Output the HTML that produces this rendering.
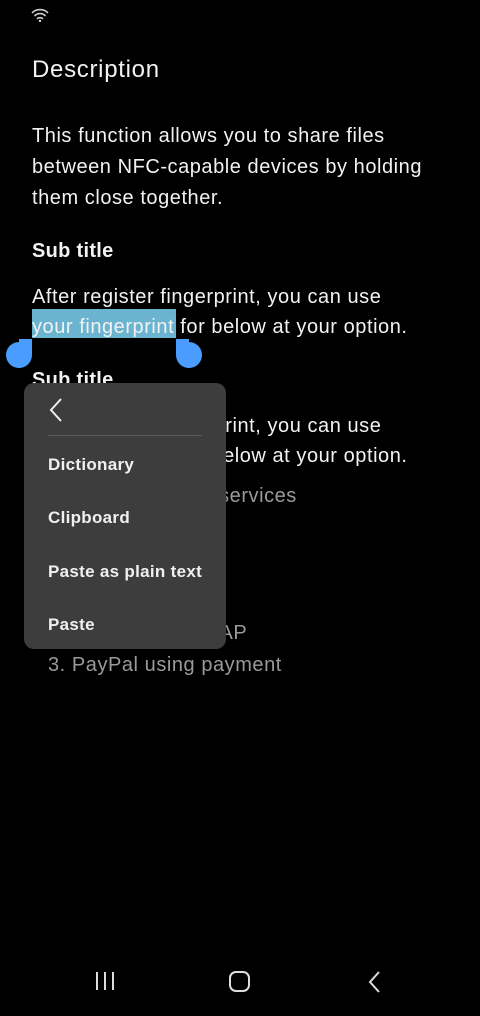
<!DOCTYPE html>
<html><head><style>
body{margin:0;width:480px;height:1016px;background:#000;position:relative;overflow:hidden;font-family:"Liberation Sans",sans-serif;color:#fff}
.t{position:absolute;white-space:nowrap}
.p{font-size:20px;color:#f2f2f2;letter-spacing:0.55px}
.g{font-size:20px;color:#9a9a9a;letter-spacing:0.55px}
.h{font-size:20px;font-weight:bold;color:#f2f2f2;letter-spacing:0.3px}
.m{position:absolute;left:24px;top:383px;width:202px;height:266px;background:#3d3d3d;border-radius:10px}
.mi{position:absolute;left:24px;font-size:17px;font-weight:bold;color:#f0f0f0;letter-spacing:0.3px}
</style></head><body>
<svg class="t" style="left:31px;top:8px" width="18" height="14" viewBox="0 0 18 14"><path d="M1 5a11 11 0 0 1 16 0M3.5 8a7.5 7.5 0 0 1 11 0M6 11a4 4 0 0 1 6 0" stroke="#ccc" stroke-width="1.6" fill="none"/><circle cx="9" cy="13" r="1.2" fill="#ccc"/></svg>
<div class="t" style="left:32px;top:56px;font-size:24px;color:#f2f2f2;letter-spacing:0.7px">Description</div>
<div class="t p" style="left:32px;top:121px;line-height:31px">This function allows you to share files<br>between NFC-capable devices by holding<br>them close together.</div>
<div class="t h" style="left:32px;top:240px">Sub title</div>
<div style="position:absolute;left:32px;top:309px;width:144px;height:29px;background:#6ab4cf"></div>
<div class="t p" style="left:32px;top:282px;line-height:30px">After register fingerprint, you can use<br>your fingerprint for below at your option.</div>
<svg class="t" style="left:5px;top:339px" width="28" height="30"><circle cx="14" cy="16" r="13" fill="#4a9cff"/><rect x="14" y="0" width="13" height="16" fill="#4a9cff"/></svg>
<svg class="t" style="left:176px;top:339px" width="28" height="30"><circle cx="13" cy="16" r="13" fill="#4a9cff"/><rect x="0" y="0" width="13" height="16" fill="#4a9cff"/></svg>
<div class="t h" style="left:32px;top:369px">Sub title</div>
<div class="t p" style="left:32px;top:411px;line-height:30px">After register fingerprint, you can use<br>your fingerprint for below at your option.</div>
<div class="t g" style="left:48px;top:485px">1. Samsung Pass services</div>
<div class="t g" style="left:48px;top:549px">2. Samsung Pass</div>
<div class="t g" style="left:48px;top:622px">1. Samsung Pay TAP</div>
<div class="t g" style="left:48px;top:654px">3. PayPal using payment</div>
<div class="m">
<svg style="position:absolute;left:22px;top:14px" width="20" height="26"><path d="M15 2L5 13L15 24" stroke="#eee" stroke-width="2" fill="none"/></svg>
<div style="position:absolute;left:24px;top:52px;width:154px;height:1px;background:#5a5a5a"></div>
<div class="mi" style="top:72px">Dictionary</div>
<div class="mi" style="top:125px">Clipboard</div>
<div class="mi" style="top:179px">Paste as plain text</div>
<div class="mi" style="top:232px">Paste</div>
</div>
<svg class="t" style="left:94px;top:970px" width="22" height="22"><path d="M3 2v18M11 2v18M19 2v18" stroke="#ddd" stroke-width="2"/></svg>
<svg class="t" style="left:228px;top:970px" width="24" height="24"><rect x="2" y="2" width="19" height="19" rx="6" stroke="#ddd" stroke-width="2" fill="none"/></svg>
<svg class="t" style="left:366px;top:970px" width="16" height="24"><path d="M13 2L4 12L13 22" stroke="#ddd" stroke-width="2" fill="none"/></svg>
</body></html>
